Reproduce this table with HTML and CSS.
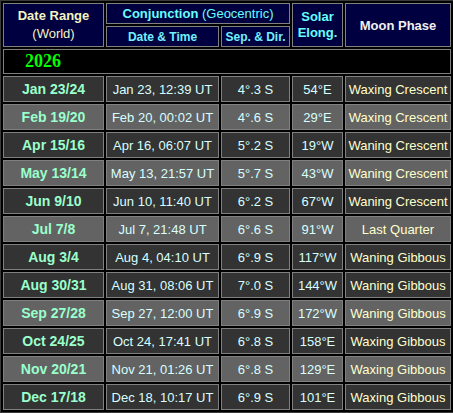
FILE: index.html
```html
<!DOCTYPE html>
<html>
<head>
<meta charset="utf-8">
<link rel="stylesheet" href="styles.css">
</head>
<body>
<table class="conj">
  <colgroup>
    <col class="c1"><col class="c2"><col class="c3"><col class="c4"><col class="c5">
  </colgroup>
  <thead>
    <tr class="h1">
      <th rowspan="2" class="hd-range"><span class="b">Date Range</span><br>(World)</th>
      <th colspan="2" class="hd-conj"><span class="b">Conjunction</span> (Geocentric)</th>
      <th rowspan="2" class="hd-elong">Solar<br>Elong.</th>
      <th rowspan="2" class="hd-phase">Moon Phase</th>
    </tr>
    <tr class="h2">
      <th class="hd-sub">Date &amp; Time</th>
      <th class="hd-sub">Sep. &amp; Dir.</th>
    </tr>
  </thead>
  <tbody>
    <tr class="year"><td colspan="5">2026</td></tr>
    <tr class="dark"><td class="rng">Jan 23/24</td><td>Jan 23, 12:39 UT</td><td>4°.3 S</td><td>54°E</td><td class="ph">Waxing Crescent</td></tr>
    <tr class="light"><td class="rng">Feb 19/20</td><td>Feb 20, 00:02 UT</td><td>4°.6 S</td><td>29°E</td><td class="ph">Waxing Crescent</td></tr>
    <tr class="dark"><td class="rng">Apr 15/16</td><td>Apr 16, 06:07 UT</td><td>5°.2 S</td><td>19°W</td><td class="ph">Waning Crescent</td></tr>
    <tr class="light"><td class="rng">May 13/14</td><td>May 13, 21:57 UT</td><td>5°.7 S</td><td>43°W</td><td class="ph">Waning Crescent</td></tr>
    <tr class="dark"><td class="rng">Jun 9/10</td><td>Jun 10, 11:40 UT</td><td>6°.2 S</td><td>67°W</td><td class="ph">Waning Crescent</td></tr>
    <tr class="light"><td class="rng">Jul 7/8</td><td>Jul 7, 21:48 UT</td><td>6°.6 S</td><td>91°W</td><td class="ph">Last Quarter</td></tr>
    <tr class="dark"><td class="rng">Aug 3/4</td><td>Aug 4, 04:10 UT</td><td>6°.9 S</td><td>117°W</td><td class="ph">Waning Gibbous</td></tr>
    <tr class="dark"><td class="rng">Aug 30/31</td><td>Aug 31, 08:06 UT</td><td>7°.0 S</td><td>144°W</td><td class="ph">Waning Gibbous</td></tr>
    <tr class="light"><td class="rng">Sep 27/28</td><td>Sep 27, 12:00 UT</td><td>6°.9 S</td><td>172°W</td><td class="ph">Waning Gibbous</td></tr>
    <tr class="dark"><td class="rng">Oct 24/25</td><td>Oct 24, 17:41 UT</td><td>6°.8 S</td><td>158°E</td><td class="ph">Waxing Gibbous</td></tr>
    <tr class="light"><td class="rng">Nov 20/21</td><td>Nov 21, 01:26 UT</td><td>6°.8 S</td><td>129°E</td><td class="ph">Waxing Gibbous</td></tr>
    <tr class="dark"><td class="rng">Dec 17/18</td><td>Dec 18, 10:17 UT</td><td>6°.9 S</td><td>101°E</td><td class="ph">Waxing Gibbous</td></tr>
  </tbody>
</table>
</body>
</html>
```
FILE: styles.css
```css
html, body {
  margin: 0;
  padding: 0;
  background: #000;
  overflow: hidden;
}

.conj {
  border: 1px solid #3a3a3a;
  border-collapse: separate;
  border-spacing: 2px;
  table-layout: fixed;
  width: 454px;
  font-family: "Liberation Sans", Arial, sans-serif;
  font-size: 13px;
  background: #000;
}

.c1 { width: 101px; }
.c2 { width: 113px; }
.c3 { width: 69px; }
.c4 { width: 51px; }
.c5 { width: 106px; }

.conj th,
.conj td {
  box-sizing: border-box;
  border: 1px solid #808080;
  padding: 0;
  text-align: center;
  vertical-align: middle;
  white-space: nowrap;
  overflow: hidden;
}

.conj th {
  background: #000040;
  font-weight: normal;
  font-size: 13px;
}

.h1 th { height: 21px; }
.h2 th { height: 21px; }

.b { font-weight: bold; }

.conj .hd-range {
  color: #f4f4c0;
  line-height: 18px;
}

.conj .hd-conj {
  color: #66ffff;
}

.conj .hd-sub {
  color: #70f0ff;
  font-weight: bold;
  font-size: 12px;
}

.conj .hd-elong {
  color: #66ffff;
  font-weight: bold;
  line-height: 16px;
}

.conj .hd-phase {
  color: #f0f0f0;
  font-weight: bold;
}

.year td {
  height: 25px;
  background: #000;
  text-align: left;
  padding-left: 21px;
  font-family: "Liberation Serif", "Times New Roman", serif;
  font-weight: bold;
  font-size: 18px;
  color: #00ff00;
}

.dark td,
.light td {
  height: 26px;
  color: #d8ffff;
}

.dark td { background: #333333; }
.light td { background: #636363; }

.conj td.rng {
  color: #99ffcc;
  font-weight: bold;
  font-size: 14px;
}

.conj td.ph {
  color: #ffffcc;
}
```
